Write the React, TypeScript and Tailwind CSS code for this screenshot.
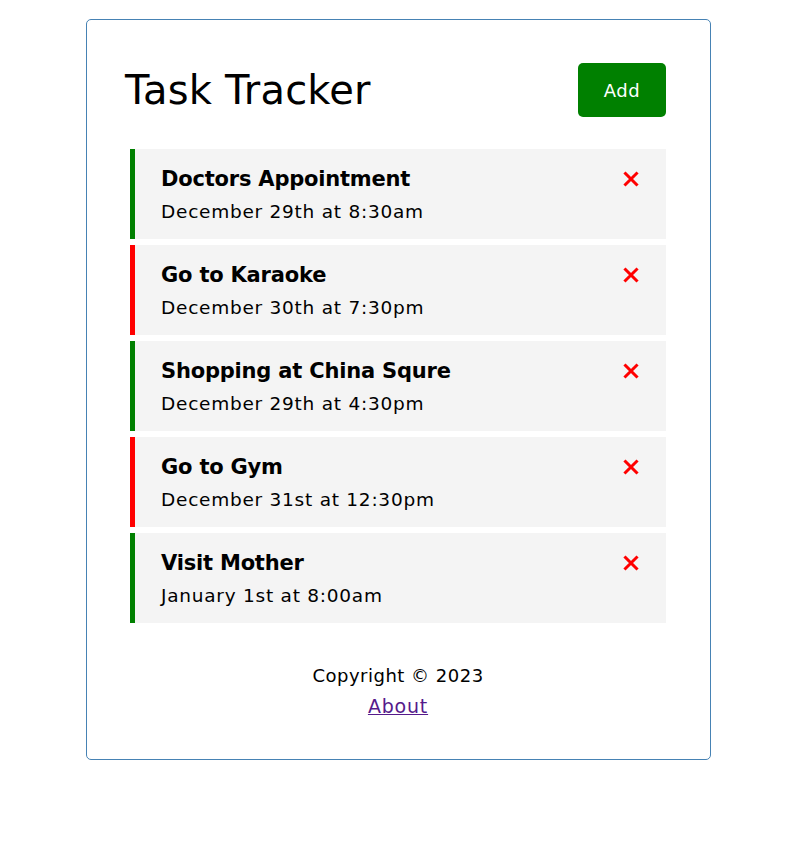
const TASKS = [
  { id: 1, text: 'Doctors Appointment', day: 'December 29th at 8:30am', reminder: true },
  { id: 2, text: 'Go to Karaoke', day: 'December 30th at 7:30pm', reminder: false },
  { id: 3, text: 'Shopping at China Squre', day: 'December 29th at 4:30pm', reminder: true },
  { id: 4, text: 'Go to Gym', day: 'December 31st at 12:30pm', reminder: false },
  { id: 5, text: 'Visit Mother', day: 'January 1st at 8:00am', reminder: true },
];

function Times() {
  return (
    <svg width="16" height="16" viewBox="0 0 16 16" className="shrink-0">
      <path d="M2.5 2.5 L13.5 13.5 M13.5 2.5 L2.5 13.5" stroke="#ff0000" strokeWidth="3" strokeLinecap="square" />
    </svg>
  );
}

export default function App() {
  return (
    <div className="min-h-screen bg-white text-black pl-[10px]" style={{ fontFamily: '"DejaVu Sans", sans-serif' }}>
      <div className="w-[625px] mx-auto mt-[19px] border border-[#4682b4] rounded-[5px] pl-[38px] pr-[39px] pt-[38px] pb-[37px]">
        {/* Header */}
        <header className="flex items-center justify-between mb-[27px]">
          <h1 className="text-[40px] leading-[52px] font-normal tracking-[0.2px]">Task Tracker</h1>
          <button className="m-[5px] w-[88px] h-[54px] rounded-[5px] bg-[#008000] text-white text-[18px] tracking-[0.6px]">
            Add
          </button>
        </header>

        {/* Tasks */}
        <div className="flex flex-col gap-[6px] mx-[5px]">
          {TASKS.map((t) => (
            <div
              key={t.id}
              className={`h-[90px] bg-[#f4f4f4] pl-[26px] pr-[27px] pt-[14px] border-l-[5px] ${
                t.reminder ? 'border-[#008000]' : 'border-[#ff0000]'
              }`}
            >
              <h3 className="flex items-center justify-between text-[21px] leading-[32px] font-semibold tracking-[-0.2px]">
                {t.text}
                <Times />
              </h3>
              <p className="mt-[3px] text-[18.5px] leading-[28px] tracking-[0.75px]">{t.day}</p>
            </div>
          ))}
        </div>

        {/* Footer */}
        <footer className="mt-[38px] text-center text-[18px] leading-[30px] tracking-[0.5px]">
          <p>Copyright &copy; 2023</p>
          <a href="#about" className="underline text-[#551a8b] text-[19px] tracking-[0.8px]">About</a>
        </footer>
      </div>
    </div>
  );
}
